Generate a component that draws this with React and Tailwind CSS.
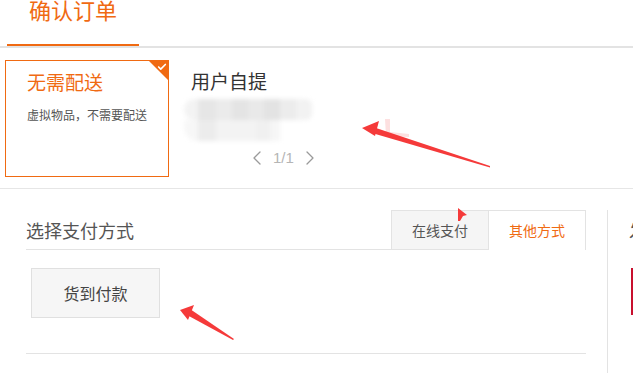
import { Check, ChevronLeft, ChevronRight } from "lucide-react";

const orange = "text-[#f06a12]";

// the blurred address under 用户自提
const BlurredAddress = () => (
  <div className="mt-[8px] -ml-[7px] w-[128px] h-[42px] blur-[2px] flex flex-col">
    <div className="flex h-[21px]">
      <div className="w-[14px] bg-[#f3f3f3] rounded-l-full" />
      <div className="w-[18px] bg-[#e6e6e6]" />
      <div className="w-[16px] bg-[#ebebeb]" />
      <div className="w-[16px] bg-[#e4e4e4]" />
      <div className="w-[16px] bg-[#e9e9e9]" />
      <div className="w-[16px] bg-[#e3e3e3]" />
      <div className="w-[16px] bg-[#ececec]" />
      <div className="w-[16px] bg-[#f2f2f2] rounded-r-md" />
    </div>
    <div className="flex h-[21px]">
      <div className="w-[14px] bg-[#f7f7f7] rounded-bl-full" />
      <div className="w-[18px] bg-[#ececec]" />
      <div className="w-[40px] bg-[#f3f3f3]" />
      <div className="w-[14px] bg-[#f0f0f0]" />
      <div className="w-[10px] bg-[#f6f6f6]" />
    </div>
  </div>
);

// red annotation arrows drawn over the screenshot
const Annotations = () => (
  <svg className="absolute inset-0 pointer-events-none" width="633" height="373">
    <polygon points="385,119 390,119 390,132 409,134 409,137 386,136" fill="#fde0e0" />
    <polygon points="373,127 490,166 490,167.5 372,133" fill="#f53a3a" />
    <polygon points="362,128 379,121 375,136" fill="#f53a3a" />
    <polygon points="190,309 234,339 233,340 187,315" fill="#f53a3a" />
    <polygon points="180,310 194,305 188,320" fill="#f53a3a" />
    <polygon points="458,208 467,215 463,216 460,221 458,221" fill="#f53a3a" />
  </svg>
);

export default function App() {
  return (
    <div className="relative w-[633px] h-[373px] overflow-hidden bg-white font-['Noto_Sans_CJK_SC','Noto_Sans',sans-serif]">
      {/* header tab */}
      <div className="h-[48px] border-b-2 border-[#e3e3e3] flex">
        <div className={`ml-[7px] w-[132px] h-[48px] border-b-2 border-[#f06a12] -mb-[2px] text-center text-[22px] leading-[22px] -mt-[2px] ${orange}`}>
          确认订单
        </div>
      </div>

      {/* delivery */}
      <div className="h-[141px] border-b border-[#e6e6e6] flex pl-[5px] pt-[12px]">
        <div className="relative shrink-0 w-[164px] h-[117px] border border-[#f06a12] pl-[21px] pt-[11px]">
          <div className={`text-[19px] leading-[20px] ${orange}`}>无需配送</div>
          <div className="mt-[17px] text-[12px] leading-[12px] text-[#555]">虚拟物品，不需要配送</div>
          <div className="absolute -top-px -right-px w-0 h-0 border-t-[21px] border-l-[21px] border-t-[#f06a12] border-l-transparent" />
          <Check className="absolute top-[1px] right-[1px] text-white" size={10} strokeWidth={4} />
        </div>

        <div className="ml-[22px] pt-[11px] flex flex-col">
          <div className="text-[19px] leading-[20px] text-[#333]">用户自提</div>
          <BlurredAddress />
          <div className="mt-[5px] ml-[54px] flex items-center gap-[4px] text-[#b5b5b5]">
            <ChevronLeft size={24} strokeWidth={1.3} className="text-[#9a9a9a]" />
            <span className="text-[15px] leading-[18px] font-['Liberation_Sans',sans-serif]">1/1</span>
            <ChevronRight size={24} strokeWidth={1.3} className="text-[#9a9a9a]" />
          </div>
        </div>
      </div>

      {/* payment */}
      <div className="flex">
        <div className="shrink-0 ml-[26px] w-[560px] pt-[21px]">
          <div className="h-[40px] flex justify-between items-end border-b border-[#e3e3e3]">
            <div className="pb-[10px] text-[18px] leading-[18px] text-[#555]">选择支付方式</div>
            <div className="flex h-[40px] -mb-px">
              <div className="w-[98px] h-[39px] bg-[#f5f5f5] border border-b-0 border-[#e3e3e3] flex items-center justify-center text-[14px] text-[#555]">
                在线支付
              </div>
              <div className={`w-[97px] h-[40px] bg-white border-t border-r border-[#e3e3e3] flex items-center justify-center pb-px text-[14px] ${orange}`}>
                其他方式
              </div>
            </div>
          </div>
          <div className="h-[104px] border-b border-[#e3e3e3] pl-[5px] pt-[18px]">
            <div className="w-[129px] h-[50px] bg-[#f6f6f6] border border-[#e0e0e0] flex items-center justify-center text-[16px] text-[#444]">
              货到付款
            </div>
          </div>
        </div>

        <div className="shrink-0 ml-[21px] mt-[21px] h-[200px] border-l border-[#e3e3e3] pl-[21px] pt-[11px]">
          <div className="text-[18px] leading-[18px] text-[#555] whitespace-nowrap">发票信息</div>
          <div className="mt-[29px] ml-[2px] w-[80px] h-[47px] border-l-2 border-[#c8102e]" />
        </div>
      </div>

      <Annotations />
    </div>
  );
}
